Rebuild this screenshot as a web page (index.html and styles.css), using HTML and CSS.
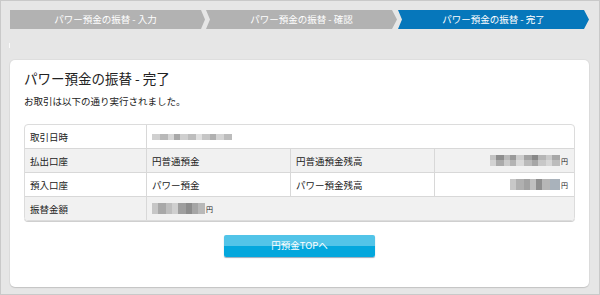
FILE: index.html
```html
<!DOCTYPE html>
<html lang="ja">
<head>
<meta charset="utf-8">
<title>パワー預金の振替 - 完了</title>
<link rel="stylesheet" href="styles.css">
</head>
<body>
<div class="page">
  <div class="steps">
    <div class="step step-first">パワー預金の振替 - 入力</div>
    <div class="step">パワー預金の振替 - 確認</div>
    <div class="step step-current">パワー預金の振替 - 完了</div>
  </div>
  <div class="mark"></div>
  <div class="card">
    <h1 class="title">パワー預金の振替 - 完了</h1>
    <p class="lead">お取引は以下の通り実行されました。</p>
    <div class="tbl">
      <div class="cell label">取引日時</div>
      <div class="cell span3"><span class="mosaic m-date"></span></div>

      <div class="cell label gray">払出口座</div>
      <div class="cell gray">円普通預金</div>
      <div class="cell gray">円普通預金残高</div>
      <div class="cell gray num"><span class="mosaic m-bal1"></span><span class="yen">円</span></div>

      <div class="cell label">預入口座</div>
      <div class="cell">パワー預金</div>
      <div class="cell">パワー預金残高</div>
      <div class="cell num"><span class="mosaic m-bal2"></span><span class="yen">円</span></div>

      <div class="cell label gray">振替金額</div>
      <div class="cell span3 gray"><span class="mosaic m-amt"></span><span class="yen">円</span></div>
    </div>
    <div class="actions">
      <a class="btn" href="#">円預金TOPへ</a>
    </div>
  </div>
</div>
</body>
</html>
```

FILE: styles.css
```css
* { box-sizing: border-box; }
html, body { margin: 0; padding: 0; }
body {
  width: 600px;
  height: 295px;
  background: #e6e6e6;
  font-family: "Noto Sans CJK JP", "Noto Sans", sans-serif;
  color: #333;
  overflow: hidden;
}
.page {
  width: 600px;
  height: 295px;
  border: 1px solid #c9c9c9;
  padding: 9px 10px 0 9px;
}
.steps {
  display: flex;
  gap: 1px;
  height: 19px;
}
.step {
  width: 191px;
  height: 19px;
  background: #b2b2b2;
  color: #fff;
  font-size: 9.5px;
  line-height: 19px;
  text-align: center;
  clip-path: polygon(0 0, calc(100% - 5px) 0, 100% 50%, calc(100% - 5px) 100%, 0 100%, 4px 50%);
}
.step-first {
  width: 195px;
  padding-right: 4px;
  clip-path: polygon(0 0, calc(100% - 4px) 0, 100% 50%, calc(100% - 4px) 100%, 0 100%);
}
.step-current {
  background: #0677bb;
}
.mark {
  width: 1px;
  height: 5px;
  background: #fafafa;
  margin: 14px 0 0 -1px;
}
.card {
  height: 227px;
  margin-top: 12px;
  background: #fff;
  border-radius: 5px;
  box-shadow: 0 1px 1px #c4c4c4, 0 0 0 1px #dedede;
  padding: 8px 14px 0 14px;
}
.title {
  margin: 0;
  font-size: 13.5px;
  font-weight: normal;
  line-height: 20px;
  color: #222;
}
.lead {
  margin: 6px 0 0 0;
  font-size: 9.5px;
  line-height: 14px;
  color: #222;
}
.tbl {
  margin-top: 16px;
  display: grid;
  grid-template-columns: 121px 144px 144px 1fr;
  border: 1px solid #dcdcdc;
  border-radius: 4px;
  overflow: hidden;
  box-shadow: 0 1px 0 #cfcfcf;
}
.cell {
  height: 24px;
  border-top: 1px solid #d8d8d8;
  border-left: 1px solid #d8d8d8;
  font-size: 9.5px;
  line-height: 22px;
  padding: 0 5px;
  display: flex;
  align-items: center;
  color: #222;
}
.cell:nth-child(-n+2) { border-top: none; height: 23px; }
.label { border-left: none; }
.span3 { grid-column: span 3; }
.gray { background: #f1f1f1; }
.num { justify-content: flex-end; padding-right: 6px; }
.yen { font-size: 7px; margin-left: 1px; align-self: flex-end; line-height: 1; margin-bottom: 7px; }
.mosaic {
  display: inline-block;
  height: 8px;
  filter: blur(0.6px);
}
.m-date {
  width: 80px;
  height: 6px;
  background: linear-gradient(90deg, #d0d0d0 0 8px, #b8b8b8 8px 16px, #d6d6d6 16px 22px, #a8a8a8 22px 28px, #cfcfcf 28px 36px, #bdbdbd 36px 44px, #e0e0e0 44px 50px, #c6c6c6 50px 58px, #b0b0b0 58px 64px, #d4d4d4 64px 72px, #bcbcbc 72px 80px);
}
.m-bal1 {
  width: 70px;
  height: 11px;
  background:
    linear-gradient(180deg, rgba(255,255,255,0) 0 5px, rgba(255,255,255,0.25) 5px 11px),
    linear-gradient(90deg, #c3c3c3 0 6px, #8e8e8e 6px 14px, #b9b9b9 14px 20px, #9a9a9a 20px 26px, #cdcdcd 26px 34px, #a3a3a3 34px 42px, #888 42px 48px, #b5b5b5 48px 56px, #c9c9c9 56px 62px, #a7a7a7 62px 70px);
}
.m-bal2 {
  width: 50px;
  height: 11px;
  background: linear-gradient(90deg, #c8c8c8 0 6px, #b0b0b0 6px 14px, #a2a2a2 14px 20px, #bfbfbf 20px 26px, #8e8e8e 26px 32px, #b6b6b6 32px 40px, #a9b2bb 40px 50px);
}
.m-amt {
  width: 53px;
  height: 11px;
  background: linear-gradient(90deg, #c6c6c6 0 6px, #a8a8a8 6px 14px, #bebebe 14px 20px, #cfcfcf 20px 26px, #9e9e9e 26px 34px, #8c8c8c 34px 40px, #a5a5a5 40px 46px, #b8b8b8 46px 53px);
}
.m-amt + .yen { margin-bottom: 7px; }
.span3 { justify-content: flex-start; }
.actions {
  display: flex;
  justify-content: center;
  margin-top: 14px;
}
.btn {
  display: block;
  width: 151px;
  height: 22px;
  border-radius: 2px;
  background: linear-gradient(180deg, #52c4e8 0 50%, #03a7dd 50% 100%);
  box-shadow: 0 1px 1px #9ab;
  color: #fff;
  text-decoration: none;
  text-align: center;
  font-size: 9.5px;
  line-height: 20px;
}
```
